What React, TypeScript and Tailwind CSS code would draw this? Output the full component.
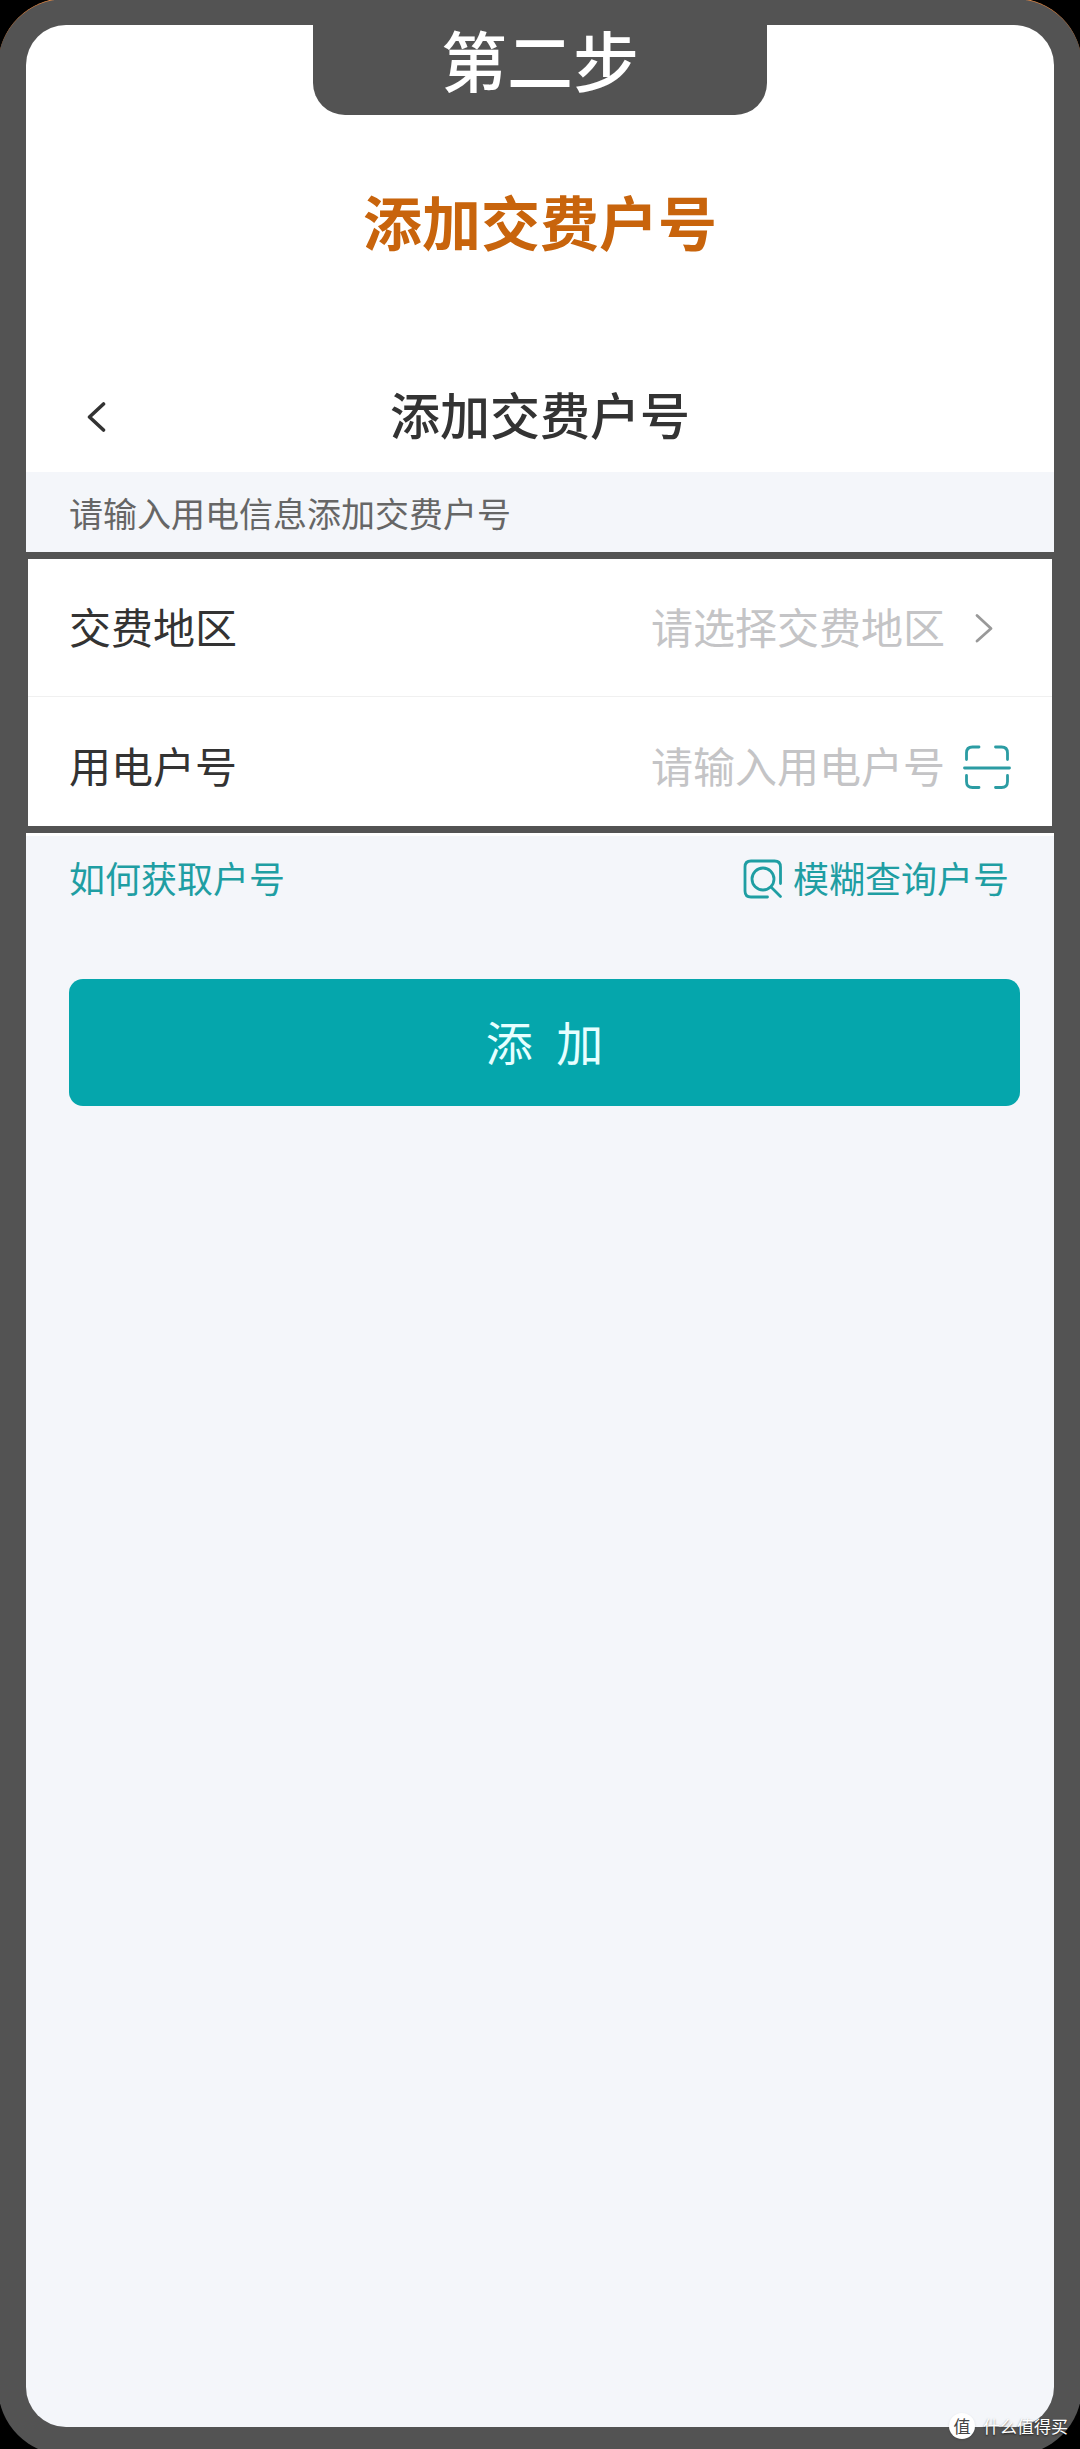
import React from "react";

function BackIcon() {
  return (
    <svg width="20" height="32" viewBox="0 0 20 32" fill="none" aria-hidden="true">
      <path d="M17.500 3L3.500 16L17.500 29" stroke="#333" strokeWidth="3.600" strokeLinecap="round" strokeLinejoin="round" />
    </svg>
  );
}

function ChevronIcon() {
  return (
    <svg width="18" height="30" viewBox="0 0 18 30" fill="none" aria-hidden="true">
      <path d="M2 2.500L16 15.500L2 28" stroke="#999" strokeWidth="2.800" strokeLinecap="round" strokeLinejoin="round" />
    </svg>
  );
}

function ScanIcon() {
  return (
    <svg width="48" height="44" viewBox="0 0 48 44" fill="none" stroke="#2b9ca3" strokeWidth="2.800" strokeLinecap="round" aria-hidden="true">
      <path d="M3.500 14.500V8Q3.500 2 9.500 2H16M32.500 2H38.500Q44.500 2 44.500 8V14.500M3.500 30.500V36.500Q3.500 42.500 9.500 42.500H16M32.500 42.500H38.500Q44.500 42.500 44.500 36.500V30.500" />
      <path d="M1.500 23H46.500" />
    </svg>
  );
}

function SearchBoxIcon() {
  return (
    <svg width="40" height="40" viewBox="0 0 40 40" fill="none" stroke="#1f9ea3" strokeWidth="2.800" strokeLinecap="round" aria-hidden="true">
      <path d="M37.500 24.500V8Q37.500 2 31.500 2H8Q2 2 2 8V32Q2 38 8 38H24.500" />
      <circle cx="20" cy="20" r="11" />
      <path d="M28 28L37.500 37.500" />
    </svg>
  );
}

export default function App() {
  return (
    <div className="relative flex min-h-screen flex-col overflow-hidden bg-black font-['Noto_Sans_CJK_SC',sans-serif] text-[#333]">
      <main className="-mx-0.5 -mt-0.5 -mb-1.5 flex flex-1 flex-col gap-[7px] rounded-[68px] border-t border-[#e08a4a] bg-[#535353] px-7 pt-[26px] pb-7">
        <section className="rounded-t-[40px] bg-white">
          <div className="mx-auto w-[454px] max-w-full rounded-b-[32px] bg-[#535353] pb-6 text-center text-[66px] leading-[66px] font-medium text-white">
            第二步
          </div>
          <h1 className="pt-[76px] pb-[111px] text-center text-[59px] leading-[60px] font-bold text-[#c8640c]">添加交费户号</h1>
          <header className="grid h-[110px] grid-cols-[80px_1fr_80px] items-center">
            <button type="button" aria-label="返回" className="flex justify-end">
              <BackIcon />
            </button>
            <h2 className="pb-2 text-center text-[50px] leading-[60px] font-medium">添加交费户号</h2>
          </header>
          <p className="bg-[#f4f6fa] px-[43px] pt-4 pb-3.5 text-[34px] leading-[50px] text-[#666]">请输入用电信息添加交费户号</p>
        </section>

        <form id="account" className="mx-0.5 bg-white text-[42px] leading-[60px]">
          <div className="flex h-[138px] items-center border-b border-[#f0f0f0] px-[41px]">
            <label htmlFor="region" className="pb-1">交费地区</label>
            <select id="region" defaultValue="" className="ml-auto appearance-none bg-transparent pb-1 text-right text-[#c4c4c6]">
              <option value="">请选择交费地区</option>
            </select>
            <span className="flex w-[66px] justify-center pl-3">
              <ChevronIcon />
            </span>
          </div>
          <div className="flex h-[129px] items-center px-[41px] pt-2.5">
            <label htmlFor="number" className="pb-1">用电户号</label>
            <input id="number" type="text" placeholder="请输入用电户号" className="min-w-0 flex-1 bg-transparent pb-1 text-right outline-none placeholder:text-[#c4c4c6]" />
            <button type="button" aria-label="扫码" className="flex w-[66px] justify-end">
              <ScanIcon />
            </button>
          </div>
        </form>

        <section className="flex-1 rounded-b-[40px] border-t-3 border-white bg-[#f4f6fa]">
          <div className="flex items-center justify-between pt-[18px] pr-[45px] pl-[43px] text-[36px] leading-[46px] text-[#1f9ea3]">
            <a href="#help" className="pb-1">如何获取户号</a>
            <a href="#search" className="flex items-center gap-2.5">
              <SearchBoxIcon />
              <span className="pb-1">模糊查询户号</span>
            </a>
          </div>
          <div className="pt-[75px] pr-[34px] pb-16 pl-[43px]">
            <button type="submit" form="account" className="h-[127px] w-full rounded-[14px] bg-[#05a6ac] pb-1 text-[47px] leading-[60px] text-[#e6ffff]">
              添{"\u2002"}加
            </button>
          </div>
        </section>
      </main>

      <div className="absolute right-3 bottom-2.5 flex items-center gap-2 text-[17px] leading-[26px] text-white [text-shadow:0_1px_2px_rgba(0,0,0,0.6)]">
        <span className="flex size-[26px] items-center justify-center rounded-full bg-white text-[17px] text-[#444] shadow-sm [text-shadow:none]">值</span>
        <span>什么值得买</span>
      </div>
    </div>
  );
}
